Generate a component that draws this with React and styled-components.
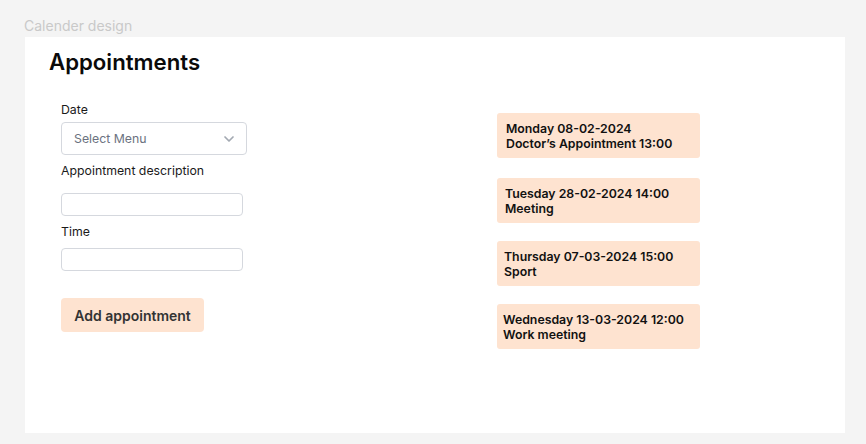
import React from "react";
import styled, { createGlobalStyle } from "styled-components";

const Global = createGlobalStyle`
  html, body { margin: 0; padding: 0; background: #f4f4f4; }
  body { font-family: Inter, "Noto Sans", Arial, sans-serif; -webkit-font-smoothing: antialiased; }
  * { box-sizing: border-box; }
`;

const Page = styled.div`
  width: 866px;
  height: 444px;
  padding: 17px 21px 11px 25px;
  display: flex;
  flex-direction: column;
`;

const FrameLabel = styled.div`
  font-size: 14px;
  line-height: 18px;
  color: #c9c9c9;
  margin-left: -1px;
  height: 20px;
`;

const Panel = styled.div`
  flex: 1;
  background: #ffffff;
  padding: 11px 25px 11px 24px;
`;

const Title = styled.h1`
  margin: 0;
  font-size: 22.2px;
  line-height: 28px;
  font-weight: 600;
  color: #0a0a0a;
`;

const Content = styled.div`
  display: flex;
  margin-top: 25px;
`;

const Form = styled.div`
  display: flex;
  flex-direction: column;
  align-items: flex-start;
  margin-left: 12px;
  width: 436px;
`;

const Label = styled.label`
  font-size: 12.3px;
  line-height: 16px;
  padding-top: 1px;
  color: #1a1a1a;
  margin-top: ${(p) => p.$mt || 0}px;
`;

const SelectBox = styled.div`
  margin-top: 4px;
  width: 186px;
  height: 33px;
  border: 1px solid #d5d8de;
  border-radius: 4px;
  display: flex;
  align-items: center;
  justify-content: space-between;
  padding: 0 9px 0 12px;
  font-size: 12.3px;
  color: #6b7280;
`;

const TextInput = styled.input`
  margin-top: ${(p) => p.$mt || 0}px;
  width: 182px;
  height: 23px;
  border: 1px solid #d5d8de;
  border-radius: 4px;
  background: #fff;
  outline: none;
`;

const Button = styled.button`
  margin-top: 27px;
  height: 34px;
  width: 143px;
  padding: 0;
  border: none;
  border-radius: 4px;
  background: #fee3d0;
  color: #333333;
  font-family: inherit;
  font-size: 14px;
  font-weight: 600;
  cursor: pointer;
`;

const Cards = styled.div`
  display: flex;
  flex-direction: column;
  gap: 20px;
  padding-top: 12px;
`;

const Card = styled.div`
  width: 203px;
  height: 45px;
  background: #fee3d0;
  border-radius: 3px;
  padding: 0 6px 0 ${(p) => p.$pl || 8}px;
  display: flex;
  flex-direction: column;
  justify-content: center;
  font-size: 12.3px;
  line-height: 15px;
  font-weight: 600;
  color: #111;
  white-space: nowrap;
  margin-top: ${(p) => p.$mt || 0}px;
`;

const Chevron = () => (
  <svg width="16" height="16" viewBox="0 0 24 24" fill="none" stroke="#a3a9b2" strokeWidth="2.6" strokeLinecap="round" strokeLinejoin="round">
    <path d="M6 9l6 6 6-6" />
  </svg>
);

const appointments = [
  { l1: "Monday 08-02-2024", l2: "Doctor’s Appointment 13:00", pl: 9 },
  { l1: "Tuesday 28-02-2024 14:00", l2: "Meeting", pl: 8 },
  { l1: "Thursday 07-03-2024 15:00", l2: "Sport", pl: 7, mt: -2 },
  { l1: "Wednesday 13-03-2024 12:00", l2: "Work meeting", pl: 6, mt: -2 },
];

export default function App() {
  return (
    <>
      <Global />
      <Page>
        <FrameLabel>Calender design</FrameLabel>
        <Panel>
          <Title>Appointments</Title>
          <Content>
            <Form>
              <Label>Date</Label>
              <SelectBox>
                <span>Select Menu</span>
                <Chevron />
              </SelectBox>
              <Label $mt={7}>Appointment description</Label>
              <TextInput $mt={14} />
              <Label $mt={7}>Time</Label>
              <TextInput $mt={8} />
              <Button>Add appointment</Button>
            </Form>
            <Cards>
              {appointments.map((a) => (
                <Card key={a.l1} $pl={a.pl} $mt={a.mt}>
                  <div>{a.l1}</div>
                  <div>{a.l2}</div>
                </Card>
              ))}
            </Cards>
          </Content>
        </Panel>
      </Page>
    </>
  );
}
